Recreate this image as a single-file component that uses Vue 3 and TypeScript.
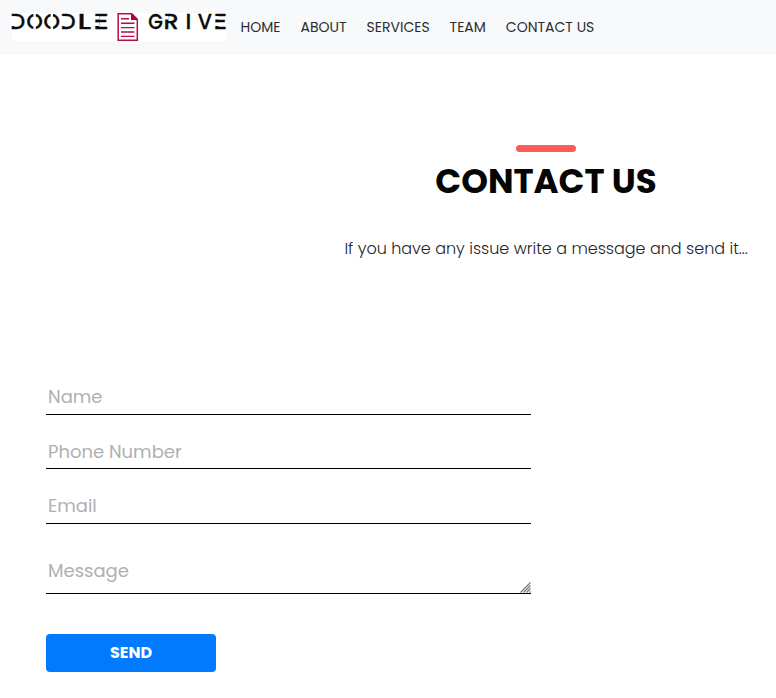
<script setup lang="ts">
import { ref } from 'vue'

interface Glyph { ch: string; x: number; w: number }

const glyphs: Glyph[] = [
  { ch: 'D', x: -1.8, w: 14.8 },
  { ch: 'O', x: 14.6, w: 16.2 },
  { ch: 'O', x: 31.6, w: 16.4 },
  { ch: 'D', x: 48.4, w: 15 },
  { ch: 'L', x: 65.4, w: 13.6 },
  { ch: 'E', x: 81.2, w: 15.6 },
  { ch: 'G', x: 136.2, w: 14.6 },
  { ch: 'R', x: 151.6, w: 15.2 },
  { ch: 'I', x: 173.4, w: 5.8 },
  { ch: 'V', x: 185.8, w: 14.2 },
  { ch: 'E', x: 201.5, w: 13.6 },
]

const nav: string[] = ['HOME', 'ABOUT', 'SERVICES', 'TEAM', 'CONTACT US']

const name = ref('')
const phone = ref('')
const email = ref('')
const message = ref('')
</script>

<template>
  <div class="page">
    <header class="navbar">
      <svg class="logo" width="214" height="28" viewBox="0 0 214 28">
        <rect width="214" height="28" fill="#fff" />
        <g class="logo-text">
          <text v-for="(g, i) in glyphs" :key="i" :x="g.x" y="15.8" :textLength="g.w" lengthAdjust="spacingAndGlyphs">{{ g.ch }}</text>
        </g>
        <g fill="#fff">
          <rect x="-1.5" y="3.1" width="4.8" height="10" />
          <rect x="21.4" y="-1" width="2.4" height="18" />
          <rect x="38.6" y="-1" width="2.4" height="18" />
          <rect x="49" y="3.1" width="4.6" height="10" />
          <rect x="82" y="3.1" width="5" height="3.4" />
          <rect x="82" y="9.4" width="5" height="3.6" />
          <rect x="202" y="3.1" width="5" height="3.4" />
          <rect x="202" y="9.4" width="5" height="3.6" />
          <rect x="152" y="3.1" width="4.4" height="3.4" />
        </g>
        <g fill="none" stroke="#b80d43">
          <path d="M106.2.7h13.5l5.6 5.6v21h-19.1z" stroke-width="1.5" />
          <path d="M119 0l7 7h-7z" fill="#a8063a" stroke="none" />
          <path d="M109 5.7h8M109 10.2h13.5M109 14.6h13.5M109 19h13.5M109 23.4h13.5" stroke-width="1.4" />
        </g>
      </svg>
      <nav class="links">
        <a v-for="item in nav" :key="item" class="link">{{ item }}</a>
      </nav>
    </header>

    <section class="intro">
      <span class="accent"></span>
      <h1>CONTACT US</h1>
      <p>If you have any issue write a message and send it...</p>
    </section>

    <form class="form" @submit.prevent>
      <input v-model="name" type="text" placeholder="Name" />
      <input v-model="phone" class="phone" type="text" placeholder="Phone Number" />
      <input v-model="email" class="email" type="text" placeholder="Email" />
      <div class="area">
        <textarea v-model="message" placeholder="Message"></textarea>
        <svg class="grip" width="11" height="11" viewBox="0 0 11 11">
          <path d="M.5 10.5l10-10M3.5 10.5l7-7M6.5 10.5l4-4M9.5 10.5l1-1" fill="none" stroke="#777" stroke-width="1.2" />
        </svg>
      </div>
      <button type="submit">SEND</button>
    </form>
  </div>
</template>

<style>
body {
  background: #fff;
}
</style>

<style scoped>
.page {
  width: 776px;
  height: 698px;
  overflow: hidden;
  font-family: Poppins, Inter, sans-serif;
  color: #212529;
}
.navbar {
  display: flex;
  height: 55px;
  background: #f8f9fa;
}
.logo {
  flex: none;
  margin: 13px 0 0 12px;
  overflow: visible;
}
.logo-text {
  font-size: 22px;
  font-weight: 500;
  fill: #0c0c0c;
  stroke: #0c0c0c;
  stroke-width: 0.3px;
}
.links {
  display: flex;
  gap: 20px;
  margin: 16px 0 0 14.6px;
  font-size: 14px;
  line-height: 22px;
}
.link {
  white-space: nowrap;
  color: #2b2d30;
}
.intro {
  display: flex;
  flex-direction: column;
  align-items: center;
  margin-left: 316px;
  padding-top: 90px;
}
.accent {
  width: 60px;
  height: 7px;
  border-radius: 4px;
  background: #ff5a5a;
}
h1 {
  margin: 9px 0 0;
  font-size: 34px;
  line-height: 40px;
  font-weight: 700;
  white-space: nowrap;
  color: #050505;
}
p {
  margin: 36px 0 0;
  font-size: 16px;
  line-height: 24px;
  font-weight: 300;
  white-space: nowrap;
}
.form {
  display: flex;
  flex-direction: column;
  align-items: flex-start;
  width: 485px;
  margin: 118px 0 0 46px;
}
input,
textarea {
  display: block;
  box-sizing: border-box;
  width: 485px;
  margin: 0;
  padding: 0 2px;
  border: 0;
  border-bottom: 1px solid #000;
  border-radius: 0;
  outline: 0;
  background: transparent;
  font-family: inherit;
  font-size: 18px;
  font-weight: 400;
  color: #000;
}
input {
  height: 36px;
}
input::placeholder,
textarea::placeholder {
  color: #b0b0b0;
  opacity: 1;
}
.phone {
  height: 35px;
  margin-top: 19px;
  padding-top: 1px;
}
.email {
  margin-top: 19px;
}
.area {
  position: relative;
  margin-top: 24px;
}
textarea {
  height: 46px;
  padding-top: 9px;
  line-height: 27px;
  overflow: hidden;
  resize: none;
}
.grip {
  position: absolute;
  right: 0;
  bottom: 1px;
}
button {
  width: 170px;
  height: 38px;
  margin-top: 40px;
  padding: 0 0 2px;
  border: 0;
  border-radius: 4px;
  background: #007bff;
  color: #fff;
  font-family: inherit;
  font-size: 16px;
  font-weight: 700;
}
</style>
